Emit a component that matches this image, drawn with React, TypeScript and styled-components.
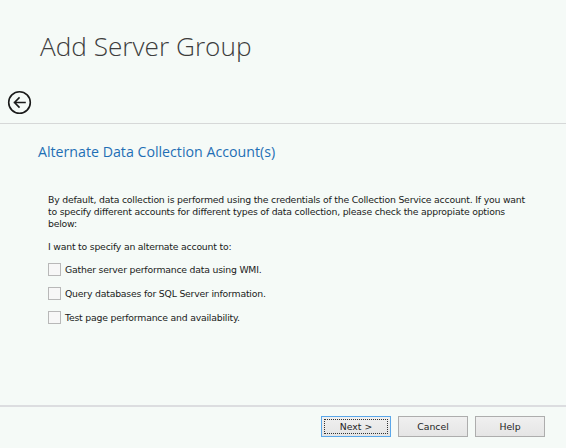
import React from 'react';
import styled, { createGlobalStyle } from 'styled-components';

const GlobalStyle = createGlobalStyle`
  html, body {
    margin: 0;
    padding: 0;
    background: #f5faf7;
  }
`;

const Window = styled.div`
  width: 566px;
  height: 448px;
  box-sizing: border-box;
  display: flex;
  flex-direction: column;
  background: #f5faf7;
  font-family: 'Liberation Sans', Arial, sans-serif;
  color: #222;
  overflow: hidden;
`;

const Header = styled.header`
  height: 124px;
  box-sizing: border-box;
  border-bottom: 1px solid #d6d8d8;
  display: flex;
  flex-direction: column;
`;

const Title = styled.h1`
  margin: 0;
  padding: 26px 0 0 40px;
  font-family: 'Open Sans', 'Liberation Sans', sans-serif;
  font-weight: 300;
  font-size: 26.2px;
  line-height: 40px;
  color: #3d3d3d;
`;

const BackButton = styled.button`
  margin: 24px 0 0 7px;
  padding: 0;
  width: 25px;
  height: 25px;
  border: none;
  background: transparent;
  display: flex;
  align-items: center;
  justify-content: center;
`;

const Body = styled.main`
  flex: 1;
  padding: 18px 38px 0 38px;
`;

const SectionTitle = styled.h2`
  margin: 0;
  font-family: 'Open Sans', 'Liberation Sans', sans-serif;
  font-weight: 400;
  font-size: 14.2px;
  line-height: 20px;
  color: #1f6fb5;
`;

const Text = styled.p<{ $top: number }>`
  margin: ${(p) => p.$top}px 0 0 10px;
  font-family: 'DejaVu Sans', Tahoma, sans-serif;
  font-size: 9.3px;
  letter-spacing: -0.2px;
  line-height: 12px;
  color: #1a1a1a;
`;

const Options = styled.div`
  margin: 10px 0 0 10px;
  display: flex;
  flex-direction: column;
  gap: 11px;
`;

const Option = styled.label`
  display: flex;
  align-items: center;
  gap: 4px;
  font-family: 'DejaVu Sans', Tahoma, sans-serif;
  font-size: 9.3px;
  letter-spacing: -0.2px;
  line-height: 13px;
  color: #1a1a1a;
`;

const Box = styled.span`
  width: 11px;
  height: 11px;
  border: 1px solid #b8b8b8;
  background: #f7f7f7;
  flex: none;
`;

const Footer = styled.footer`
  height: 43px;
  box-sizing: border-box;
  flex: none;
  border-top: 2px solid #dcdde0;
  display: flex;
  justify-content: flex-end;
  align-items: flex-start;
  gap: 7px;
  padding: 9px 21px 0 0;
`;

const Button = styled.button<{ $focused?: boolean }>`
  width: 70px;
  height: 21px;
  box-sizing: border-box;
  border: 1px solid ${(p) => (p.$focused ? '#5aa7ea' : '#adadad')};
  background: linear-gradient(#f0f0f0, #e5e5e5);
  font-family: 'DejaVu Sans', Tahoma, sans-serif;
  font-size: 9.3px;
  color: #1e1e1e;
  padding: 0;
  outline: ${(p) => (p.$focused ? '1px dotted #333' : 'none')};
  outline-offset: -4px;
`;

const ArrowIcon = () => (
  <svg width="25" height="25" viewBox="0 0 25 25" fill="none" stroke="#1a1a1a" strokeWidth="1.6">
    <circle cx="12.5" cy="12.5" r="10.8" />
    <path d="M18 12.5H7.5M12 8L7.5 12.5L12 17" strokeLinecap="square" />
  </svg>
);

const options = [
  'Gather server performance data using WMI.',
  'Query databases for SQL Server information.',
  'Test page performance and availability.',
];

export default function App() {
  return (
    <Window>
      <GlobalStyle />
      <Header>
        <Title>Add Server Group</Title>
        <BackButton aria-label="Back">
          <ArrowIcon />
        </BackButton>
      </Header>
      <Body>
        <SectionTitle>Alternate Data Collection Account(s)</SectionTitle>
        <Text $top={32}>
          By default, data collection is performed using the credentials of the Collection Service account. If you want
          to specify different accounts for different types of data collection, please check the appropiate options
          below:
        </Text>
        <Text $top={11}>I want to specify an alternate account to:</Text>
        <Options>
          {options.map((o) => (
            <Option key={o}>
              <Box />
              {o}
            </Option>
          ))}
        </Options>
      </Body>
      <Footer>
        <Button $focused>Next &gt;</Button>
        <Button>Cancel</Button>
        <Button>Help</Button>
      </Footer>
    </Window>
  );
}
